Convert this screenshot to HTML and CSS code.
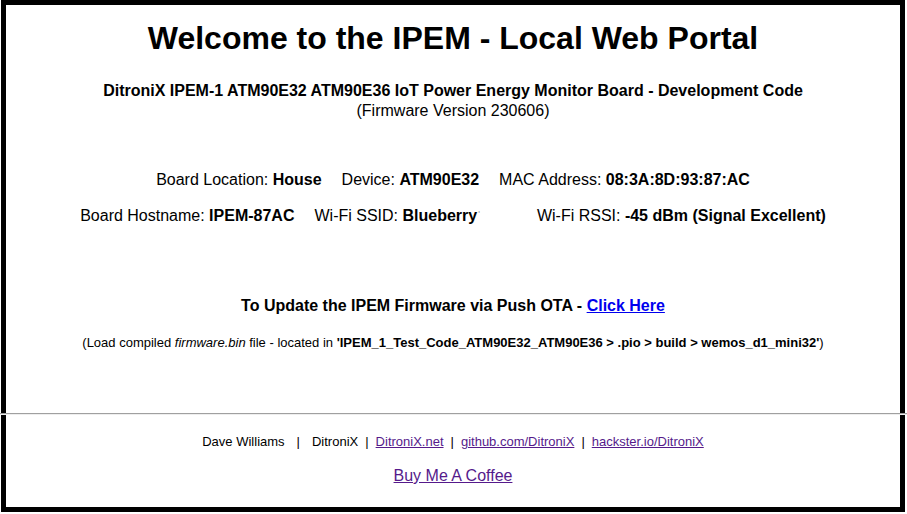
FILE: index.html
```html
<!DOCTYPE html>
<html>
<head>
<meta charset="utf-8">
<title>IPEM - Local Web Portal</title>
<link rel="stylesheet" href="styles.css">
</head>
<body>
<div class="frame">
  <h1 class="title">Welcome to the IPEM - Local Web Portal</h1>
  <div class="sub">
    <div class="sub-bold">DitroniX IPEM-1 ATM90E32 ATM90E36 IoT Power Energy Monitor Board - Development Code</div>
    <div class="sub-ver">(Firmware Version 230606)</div>
  </div>
  <div class="info">
    <div class="info-row">
      <span>Board Location: <b>House</b></span>
      <span>Device: <b>ATM90E32</b></span>
      <span>MAC Address: <b>08:3A:8D:93:87:AC</b></span>
    </div>
    <div class="info-row">
      <span>Board Hostname: <b>IPEM-87AC</b></span>
      <span class="ssid">Wi-Fi SSID: <b>Blueberry</b><span class="ssid-tail">'</span></span>
      <span>Wi-Fi RSSI: <b>-45 dBm (Signal Excellent)</b></span>
    </div>
  </div>
  <div class="ota">To Update the IPEM Firmware via Push OTA - <a class="link-new" href="#update">Click Here</a></div>
  <div class="note">(Load compiled <i>firmware.bin</i> file - located in <b>'IPEM_1_Test_Code_ATM90E32_ATM90E36 &gt; .pio &gt; build &gt; wemos_d1_mini32'</b>)</div>
  <hr class="rule">
  <div class="footer">
    <span>Dave Williams</span><span class="sep wide">|</span><span>DitroniX</span><span class="sep">|</span><a class="link-visited" href="#n">DitroniX.net</a><span class="sep">|</span><a class="link-visited" href="#g">github.com/DitroniX</a><span class="sep">|</span><a class="link-visited" href="#h">hackster.io/DitroniX</a>
  </div>
  <div class="coffee"><a class="link-visited" href="#c">Buy Me A Coffee</a></div>
</div>
</body>
</html>
```

FILE: styles.css
```css
html, body {
  margin: 0;
  padding: 0;
  background: #ffffff;
}

body {
  font-family: "Liberation Sans", Arial, sans-serif;
  color: #000000;
  width: 907px;
  height: 514px;
  overflow: hidden;
}

.frame {
  box-sizing: border-box;
  margin-left: 1px;
  width: 904px;
  height: 512px;
  border: 5px solid #000000;
  text-align: center;
}

.title {
  margin: 15px 0 0 0;
  font-size: 32px;
  line-height: 36px;
  font-weight: bold;
}

.sub {
  margin-top: 25px;
  font-size: 16px;
  line-height: 20px;
}

.sub-bold {
  font-weight: bold;
}

.info {
  margin-top: 49px;
  font-size: 16px;
  line-height: 20px;
}

.info-row {
  display: flex;
  justify-content: center;
  align-items: baseline;
  gap: 20px;
}

.info-row + .info-row {
  margin-top: 16px;
}

.ssid {
  padding-right: 37px;
}

.ssid-tail {
  color: #9a9a9a;
  font-size: 9px;
  line-height: 0;
  vertical-align: 4px;
  margin-left: 1px;
}

.ota {
  margin-top: 70px;
  font-size: 16px;
  line-height: 20px;
  font-weight: bold;
}

.note {
  margin-top: 19px;
  font-size: 13px;
  line-height: 16px;
}

.rule {
  margin: 62px -7px 0 -6px;
  height: 0;
  border: 0;
  border-top: 1px solid #a0a0a0;
  border-bottom: 1px solid #eeeeee;
}

.footer {
  margin-top: 19px;
  font-size: 13px;
  line-height: 16px;
}

.sep {
  margin: 0 7px;
}

.sep.wide {
  margin: 0 12px;
}

.coffee {
  margin-top: 16px;
  font-size: 16px;
  line-height: 20px;
}

.link-new {
  color: #0000ee;
  text-decoration: underline;
}

.link-visited {
  color: #551a8b;
  text-decoration: underline;
}
```
